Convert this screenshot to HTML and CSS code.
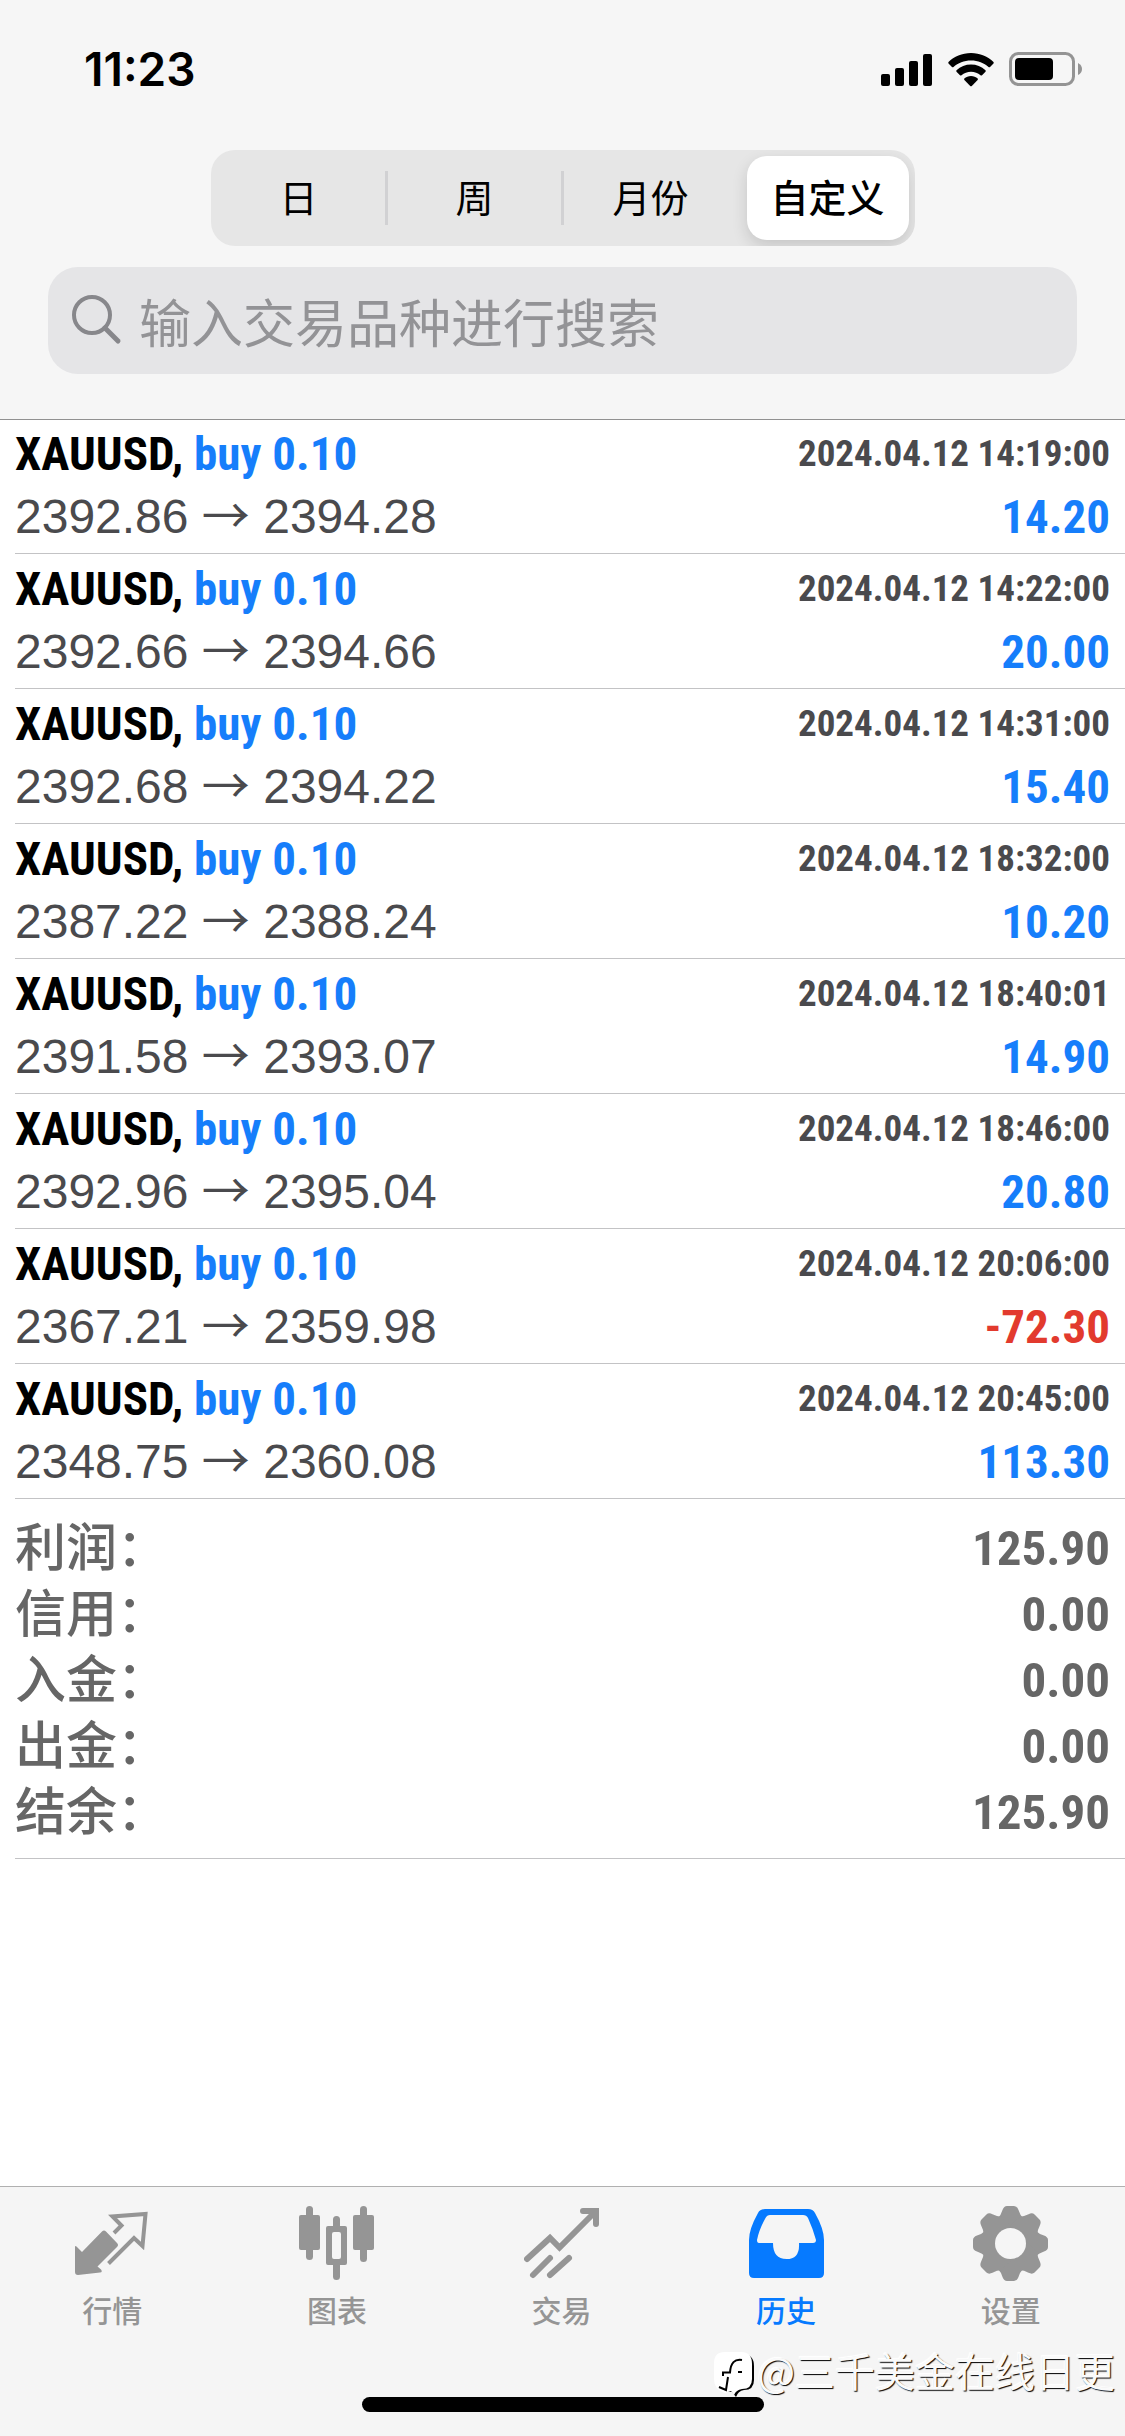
FILE: index.html
```html
<!DOCTYPE html>
<html lang="zh-CN">
<head>
<meta charset="utf-8">
<meta name="viewport" content="width=device-width, initial-scale=1">
<title>历史</title>
<link rel="stylesheet" href="styles.css">
</head>
<body>
<div class="app">
  <header class="header">
    <div class="status">
      <time class="clock">11:23</time>
      <div class="status-icons">
        <svg width="52" height="36" viewBox="0 0 52 36" aria-hidden="true"><rect x="0" y="23" width="9" height="12" rx="2"/><rect x="14" y="17" width="9" height="18" rx="2"/><rect x="28" y="10" width="9" height="25" rx="2"/><rect x="42" y="3" width="9" height="32" rx="2"/></svg>
        <svg width="46" height="36" viewBox="0 0 46 36" aria-hidden="true"><path d="M23 2C32 2 40 5.500 45.500 11Q46 11.800 45.500 12.500L42 16Q41.300 16.500 40.500 16C36 12 30 9.500 23 9.500S10 12 5.500 16Q4.700 16.500 4 16L.5 12.500Q0 11.800 .5 11C6 5.500 14 2 23 2Z"/><path d="M23 13.500C28.500 13.500 33.500 15.500 37.500 19.300Q38 20 37.500 20.700L34 24.200Q33.200 24.700 32.500 24.200C30 22 26.500 20.800 23 20.800S16 22 13.500 24.200Q12.800 24.700 12 24.200L8.500 20.700Q8 20 8.500 19.300C12.500 15.500 17.500 13.500 23 13.500Z"/><path d="M23 25C25.500 25 28 26 29.700 27.500Q30.200 28.200 29.600 28.900L23.800 34.900Q23 35.500 22.200 34.900L16.400 28.900Q15.800 28.200 16.300 27.500C18 26 20.500 25 23 25Z"/></svg>
        <svg width="74" height="36" viewBox="0 0 74 36" aria-hidden="true"><rect x="1.500" y="2.500" width="63" height="31" rx="8" fill="none" stroke="#949494" stroke-width="3"/><rect x="6" y="7" width="38" height="22" rx="4"/><path fill="#949494" d="M69 12Q73 14 73 18T69 24Z"/></svg>
      </div>
    </div>
    <div class="segments" role="group" aria-label="时间范围">
      <button class="segment" type="button">日</button>
      <button class="segment" type="button">周</button>
      <button class="segment" type="button">月份</button>
      <button class="segment selected" type="button" aria-pressed="true">自定义</button>
    </div>
    <label class="search">
      <svg width="52" height="52" viewBox="0 0 52 52" fill="none" stroke="#87878b" stroke-linecap="round" aria-hidden="true"><circle cx="20" cy="20" r="18" stroke-width="4"/><path d="M33 33L46 46" stroke-width="5"/></svg>
      <input class="search-input" type="search" placeholder="输入交易品种进行搜索" aria-label="搜索">
    </label>
  </header>

  <main class="content">
    <ul class="deals">
      <li class="deal"><div class="line"><b class="symbol">XAUUSD, <span class="side">buy 0.10</span></b><time class="time">2024.04.12 14:19:00</time></div><div class="line"><span class="prices">2392.86 <span class="arrow">→</span> 2394.28</span><b class="profit">14.20</b></div></li>
      <li class="deal"><div class="line"><b class="symbol">XAUUSD, <span class="side">buy 0.10</span></b><time class="time">2024.04.12 14:22:00</time></div><div class="line"><span class="prices">2392.66 <span class="arrow">→</span> 2394.66</span><b class="profit">20.00</b></div></li>
      <li class="deal"><div class="line"><b class="symbol">XAUUSD, <span class="side">buy 0.10</span></b><time class="time">2024.04.12 14:31:00</time></div><div class="line"><span class="prices">2392.68 <span class="arrow">→</span> 2394.22</span><b class="profit">15.40</b></div></li>
      <li class="deal"><div class="line"><b class="symbol">XAUUSD, <span class="side">buy 0.10</span></b><time class="time">2024.04.12 18:32:00</time></div><div class="line"><span class="prices">2387.22 <span class="arrow">→</span> 2388.24</span><b class="profit">10.20</b></div></li>
      <li class="deal"><div class="line"><b class="symbol">XAUUSD, <span class="side">buy 0.10</span></b><time class="time">2024.04.12 18:40:01</time></div><div class="line"><span class="prices">2391.58 <span class="arrow">→</span> 2393.07</span><b class="profit">14.90</b></div></li>
      <li class="deal"><div class="line"><b class="symbol">XAUUSD, <span class="side">buy 0.10</span></b><time class="time">2024.04.12 18:46:00</time></div><div class="line"><span class="prices">2392.96 <span class="arrow">→</span> 2395.04</span><b class="profit">20.80</b></div></li>
      <li class="deal"><div class="line"><b class="symbol">XAUUSD, <span class="side">buy 0.10</span></b><time class="time">2024.04.12 20:06:00</time></div><div class="line"><span class="prices">2367.21 <span class="arrow">→</span> 2359.98</span><b class="profit loss">-72.30</b></div></li>
      <li class="deal"><div class="line"><b class="symbol">XAUUSD, <span class="side">buy 0.10</span></b><time class="time">2024.04.12 20:45:00</time></div><div class="line"><span class="prices">2348.75 <span class="arrow">→</span> 2360.08</span><b class="profit">113.30</b></div></li>
    </ul>
    <dl class="summary">
      <div class="total"><dt>利润：</dt><dd>125.90</dd></div>
      <div class="total"><dt>信用：</dt><dd>0.00</dd></div>
      <div class="total"><dt>入金：</dt><dd>0.00</dd></div>
      <div class="total"><dt>出金：</dt><dd>0.00</dd></div>
      <div class="total"><dt>结余：</dt><dd>125.90</dd></div>
    </dl>
  </main>

  <footer class="footer">
    <nav class="tabs">
      <a class="tab" href="#quotes">
        <svg width="75" height="75" viewBox="0 0 75 75" aria-hidden="true"><path fill="currentColor" d="M0 41Q0 39 2 41L7 46L27 25.500Q29 23.500 31 25.500L42 37Q44 39 42 41L22.500 60.500L26 63.500Q28 66 25 66.500L3 69Q0 69 0 66Z"/><path d="M39 27L46.500 19.500L37.500 10.500L70.500 8L67.500 40L59 32L33.500 57.500" fill="none" stroke="currentColor" stroke-width="4"/></svg>
        <span>行情</span>
      </a>
      <a class="tab" href="#charts">
        <svg width="75" height="75" viewBox="0 0 75 75" aria-hidden="true"><g fill="currentColor"><rect x="7" y="0" width="7" height="54" rx="3.500"/><rect x="0" y="9" width="21" height="35" rx="2"/><rect x="61" y="0" width="7" height="56" rx="3.500"/><rect x="54" y="9" width="21" height="35" rx="2"/><path fill-rule="evenodd" d="M34 20V13.500A3.500 3.500 0 0 1 41 13.500V20H46Q48 20 48 22V57Q48 59 46 59H41V70.500A3.500 3.500 0 0 1 34 70.500V59H29Q27 59 27 57V22Q27 20 29 20ZM35 26Q33 26 33 28V51Q33 53 35 53H40Q42 53 42 51V28Q42 26 40 26Z"/></g></svg>
        <span>图表</span>
      </a>
      <a class="tab" href="#trade">
        <svg width="75" height="75" viewBox="0 0 75 75" fill="none" stroke="currentColor" stroke-width="6" stroke-linecap="round" aria-hidden="true"><path d="M3 53L26 32L35.500 41.500L70 7"/><path d="M59 5H72V18"/><path d="M9 69L26 52M26 69L45 52"/></svg>
        <span>交易</span>
      </a>
      <a class="tab active" href="#history" aria-current="page">
        <svg width="75" height="75" viewBox="0 0 75 75" aria-hidden="true"><path fill="currentColor" fill-rule="evenodd" d="M16 3H59Q64 3 66 7Q75 23 75 34V67Q75 72 70 72H5Q0 72 0 67V34Q0 23 9 7Q11 3 16 3ZM21 9Q18 9 16.500 12Q10 24 8 34Q8 37 10 37H24Q24 53 37.500 53T50 37H64Q67 37 67 34Q64 23 59 12Q57.500 9 54 9Z"/></svg>
        <span>历史</span>
      </a>
      <a class="tab" href="#settings">
        <svg width="75" height="75" viewBox="0 0 75 75" aria-hidden="true"><defs><path id="tooth" d="M25 12Q28 9 29.500 4Q31 0 34 0H41Q44 0 45.500 4Q47 9 50 12V30H25Z"/></defs><mask id="hub"><rect width="75" height="75" fill="#fff"/><circle cx="37.500" cy="37.500" r="15.500" fill="#000"/></mask><g fill="currentColor" mask="url(#hub)"><circle cx="37.500" cy="37.500" r="28.500"/><use href="#tooth"/><use href="#tooth" transform="rotate(45 37.500 37.500)"/><use href="#tooth" transform="rotate(90 37.500 37.500)"/><use href="#tooth" transform="rotate(135 37.500 37.500)"/><use href="#tooth" transform="rotate(180 37.500 37.500)"/><use href="#tooth" transform="rotate(225 37.500 37.500)"/><use href="#tooth" transform="rotate(270 37.500 37.500)"/><use href="#tooth" transform="rotate(315 37.500 37.500)"/></g></svg>
        <span>设置</span>
      </a>
    </nav>
    <div class="home-bar"></div>
    <div class="watermark">
      <svg width="41" height="46" viewBox="0 0 41 46" aria-hidden="true"><path d="M12 2H28Q40 2 40 14V28Q40 38 30 38Q24 39 22 45L18 40Q2 40 2 28V12Q2 2 12 2Z" fill="#000"/><path d="M11 0H27Q38 0 38 12V27Q38 37 28 37Q22 38 20 43L17 39L11 41Q0 38 0 27V11Q0 0 11 0Z" fill="#fff"/><path d="M28 8Q17 6 16 20.500H9V24M24 20H28M14 25L12 38L5 35" fill="none" stroke="#000" stroke-width="2"/></svg>
      <span>@三千美金在线日更</span>
    </div>
  </footer>
</div>
</body>
</html>
```
FILE: styles.css
```css
* {
  box-sizing: border-box;
}

body {
  margin: 0;
  background: #fff;
  color: #000;
  font-family: "Liberation Sans", "Noto Sans CJK SC", sans-serif;
}

.app {
  display: flex;
  flex-direction: column;
  min-height: 100vh;
}

.header {
  position: relative;
  background: #f6f6f6;
  border-bottom: 1px solid #919191;
  padding-bottom: 45px;
}

.status {
  display: flex;
  justify-content: space-between;
  align-items: center;
  height: 150px;
  padding: 0 42px 12px 84px;
}

.clock {
  font: 600 46px/54px Inter, sans-serif;
}

.status-icons {
  display: flex;
  align-items: center;
  gap: 15px;
}

.segments {
  display: grid;
  grid-template-columns: repeat(4, minmax(0, 1fr));
  width: 704px;
  max-width: 100%;
  height: 96px;
  margin: 0 auto 21px;
  border-radius: 24px;
  background: #e6e6e6;
  overflow: hidden;
}

.segment {
  position: relative;
  padding: 0 0 4px;
  border: 0;
  background: none;
  color: #000;
  font: 400 38px/56px "Noto Sans CJK SC", sans-serif;
}

.segment + .segment:not(.selected)::before {
  content: "";
  position: absolute;
  left: -2px;
  top: 21px;
  width: 3px;
  height: 54px;
  background: #d1d1d3;
}

.selected {
  margin: 6px 6px 6px 8px;
  border-radius: 20px;
  background: #fff;
  box-shadow: 0 6px 16px rgba(0, 0, 0, .14);
  font-weight: 500;
}

.search {
  display: flex;
  align-items: center;
  gap: 15px;
  height: 107px;
  margin: 0 48px;
  padding: 0 24px;
  border-radius: 30px;
  background: #e5e5e7;
}

.search-input {
  flex: 1;
  min-width: 0;
  padding: 0;
  border: 0;
  outline: 0;
  background: none;
  font: 400 52px/75px "Noto Sans CJK SC", sans-serif;
  color: #000;
}

.search-input::placeholder {
  color: #939396;
}

.content {
  flex: 1;
  margin-top: -1px;
  padding-left: 15px;
}

.deals {
  margin: 0;
  padding: 0;
  list-style: none;
}

.deal {
  height: 135px;
  padding: 3px 15px 0 0;
  border-bottom: 1px solid #c3c3c5;
}

.line {
  display: flex;
  justify-content: space-between;
  height: 63px;
  line-height: 63px;
  white-space: nowrap;
}

.symbol,
.time,
.profit,
.total dd {
  font-family: "Roboto Condensed", "Liberation Sans", sans-serif;
  font-weight: 700;
}

.prices {
  color: #4a4a4d;
  font-size: 48px;
}

.symbol {
  font-size: 47px;
}

.profit {
  font-size: 47px;
}

.side,
.profit {
  color: #167efb;
}

.profit.loss {
  color: #e23a2e;
}

.time {
  font-size: 37px;
  color: #4a4a4d;
}

.arrow {
  font-family: "Noto Sans CJK SC", sans-serif;
  line-height: 1;
}

.summary {
  margin: 0;
  padding: 15px 15px 14px 0;
  border-bottom: 1px solid #c3c3c5;
  color: #666;
}

.total {
  display: flex;
  justify-content: space-between;
  height: 66px;
  line-height: 66px;
}

.total dt,
.total dd {
  margin: 0;
  padding-top: 2px;
}

.total dt {
  font-size: 51px;
  font-weight: 500;
}

.total dd {
  font-size: 49px;
}

.footer {
  position: relative;
  height: 250px;
  border-top: 1px solid #b0b0b0;
  background: #f5f5f5;
}

.tabs {
  display: flex;
  padding: 19px 2px 0 0;
}

.tab {
  flex: 1;
  display: flex;
  flex-direction: column;
  align-items: center;
  gap: 8px;
  color: #959595;
  font: 500 30px/40px "Noto Sans CJK SC", sans-serif;
  text-decoration: none;
}

.active {
  color: #067aff;
}

.home-bar {
  width: 402px;
  height: 15px;
  margin: 68px auto 0;
  border-radius: 8px;
  background: #000;
}

.watermark {
  position: absolute;
  right: 10px;
  bottom: 36px;
  display: flex;
  align-items: flex-start;
  gap: 2px;
  color: #fafafa;
  font: 400 40px/48px "Noto Sans CJK SC", sans-serif;
  text-shadow: 1px 1px 1px #000, -1px -1px 1px #fff;
  white-space: nowrap;
}

.watermark span {
  margin: -6px 0 6px;
}
```
